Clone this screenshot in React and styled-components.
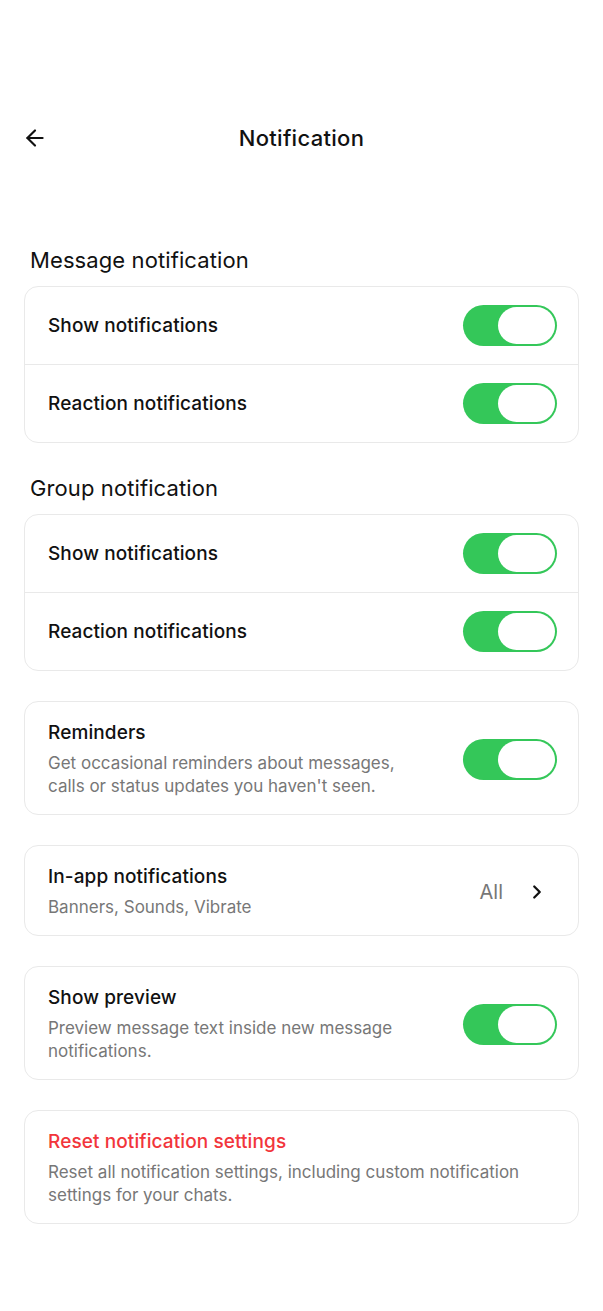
import React from "react";
import styled, { createGlobalStyle } from "styled-components";
import { ArrowLeft, ChevronRight } from "lucide-react";

const GlobalStyle = createGlobalStyle`
  body {
    margin: 0;
    background: #ffffff;
    font-family: "Inter", "Noto Sans", sans-serif;
    color: #111111;
  }
`;

const Page = styled.div`
  width: 603px;
  min-height: 1311px;
  padding: 114px 24px 60px;
  box-sizing: border-box;
  display: flex;
  flex-direction: column;
`;

const Header = styled.div`
  position: relative;
  display: flex;
  align-items: center;
  justify-content: center;
  height: 48px;
  margin-bottom: 84px;
`;

const BackButton = styled.button`
  position: absolute;
  left: -2px;
  top: 50%;
  transform: translateY(-50%);
  background: none;
  border: none;
  padding: 0;
  display: flex;
  color: #111;
`;

const Title = styled.h1`
  margin: 0;
  font-size: 22px;
  font-weight: 500;
  letter-spacing: 0.3px;
`;

const SectionLabel = styled.h2`
  margin: 0 0 12px 6px;
  font-size: 22px;
  font-weight: 400;
  line-height: 28px;
  letter-spacing: 0.1px;
`;

const Card = styled.div`
  border: 1.5px solid #e9e9e9;
  border-radius: 14px;
  display: flex;
  flex-direction: column;
  margin-bottom: ${(p) => p.$gap || 30}px;
  box-sizing: border-box;
`;

const Row = styled.div`
  display: flex;
  align-items: center;
  justify-content: space-between;
  height: 77px;
  padding: 0 21px 0 23px;
  & + & {
    border-top: 1.5px solid #e9e9e9;
  }
`;

const DetailRow = styled.div`
  display: flex;
  align-items: center;
  justify-content: space-between;
  padding: 19px 21px 16px 23px;
`;

const TextCol = styled.div`
  display: flex;
  flex-direction: column;
  gap: 7px;
  max-width: ${(p) => p.$max || 360}px;
`;

const RowTitle = styled.div`
  font-size: 19px;
  font-weight: 500;
  line-height: 24px;
  letter-spacing: 0.1px;
  color: ${(p) => (p.$danger ? "#f2353b" : "#111")};
`;

const RowDesc = styled.div`
  font-size: 17px;
  line-height: 23px;
  letter-spacing: 0px;
  color: #777777;
`;

const Track = styled.div`
  width: 94px;
  height: 41px;
  border-radius: 21px;
  background: #34c759;
  padding: 2px;
  box-sizing: border-box;
  display: flex;
  justify-content: flex-end;
  flex-shrink: 0;
`;

const Knob = styled.div`
  width: 57px;
  height: 37px;
  border-radius: 19px;
  background: #ffffff;
`;

const Trailing = styled.div`
  display: flex;
  align-items: center;
  gap: 23px;
  color: #777;
  font-size: 20px;
  padding-right: 9px;
`;

const Toggle = () => (
  <Track>
    <Knob />
  </Track>
);

export default function App() {
  return (
    <>
      <GlobalStyle />
      <Page>
        <Header>
          <BackButton>
            <ArrowLeft size={26} strokeWidth={2} />
          </BackButton>
          <Title>Notification</Title>
        </Header>

        <SectionLabel>Message notification</SectionLabel>
        <Card $gap={31}>
          <Row>
            <RowTitle>Show notifications</RowTitle>
            <Toggle />
          </Row>
          <Row>
            <RowTitle>Reaction notifications</RowTitle>
            <Toggle />
          </Row>
        </Card>

        <SectionLabel>Group notification</SectionLabel>
        <Card>
          <Row>
            <RowTitle>Show notifications</RowTitle>
            <Toggle />
          </Row>
          <Row>
            <RowTitle>Reaction notifications</RowTitle>
            <Toggle />
          </Row>
        </Card>

        <Card>
          <DetailRow>
            <TextCol $max={355}>
              <RowTitle>Reminders</RowTitle>
              <RowDesc>
                Get occasional reminders about messages, calls or status updates you haven't seen.
              </RowDesc>
            </TextCol>
            <Toggle />
          </DetailRow>
        </Card>

        <Card>
          <DetailRow>
            <TextCol>
              <RowTitle>In-app notifications</RowTitle>
              <RowDesc>Banners, Sounds, Vibrate</RowDesc>
            </TextCol>
            <Trailing>
              All
              <ChevronRight size={22} strokeWidth={2.5} color="#111" />
            </Trailing>
          </DetailRow>
        </Card>

        <Card>
          <DetailRow>
            <TextCol $max={355}>
              <RowTitle>Show preview</RowTitle>
              <RowDesc>Preview message text inside new message notifications.</RowDesc>
            </TextCol>
            <Toggle />
          </DetailRow>
        </Card>

        <Card>
          <DetailRow>
            <TextCol $max={480}>
              <RowTitle $danger>Reset notification settings</RowTitle>
              <RowDesc>
                Reset all notification settings, including custom notification settings for your chats.
              </RowDesc>
            </TextCol>
          </DetailRow>
        </Card>
      </Page>
    </>
  );
}
